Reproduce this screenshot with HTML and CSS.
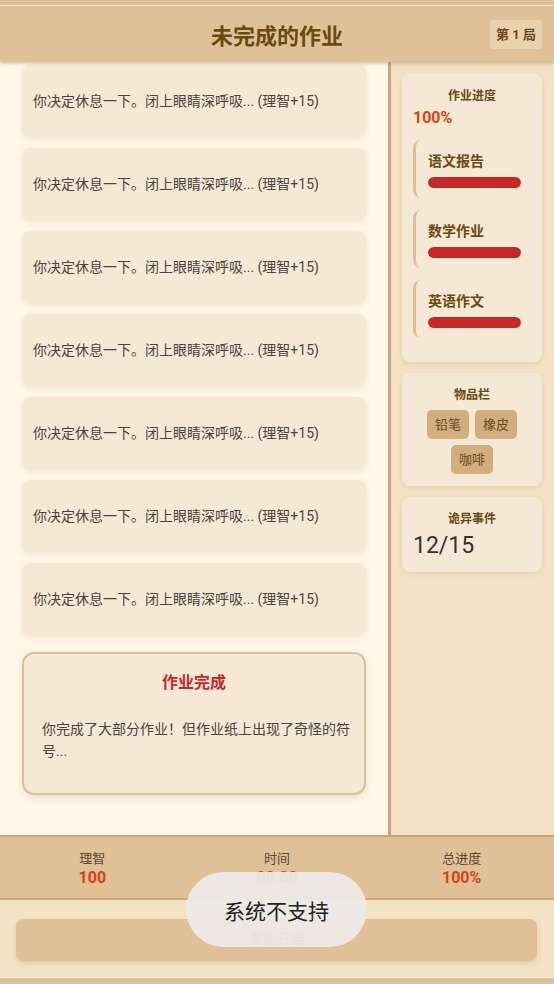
FILE: index.html
```html
<!DOCTYPE html>
<html lang="zh-CN">
<head>
    <meta charset="UTF-8">
    <meta name="viewport" content="width=device-width, initial-scale=1.0">
    <title>未完成的作业</title>
    <link rel="stylesheet" href="styles.css">
</head>
<body>
    <div class="app">
        <header class="header">
            <h1>未完成的作业</h1>
            <span class="round">第 1 局</span>
        </header>

        <div class="main">
            <div class="story">
                <div class="event">你决定休息一下。闭上眼睛深呼吸... (理智+15)</div>
                <div class="event">你决定休息一下。闭上眼睛深呼吸... (理智+15)</div>
                <div class="event">你决定休息一下。闭上眼睛深呼吸... (理智+15)</div>
                <div class="event">你决定休息一下。闭上眼睛深呼吸... (理智+15)</div>
                <div class="event">你决定休息一下。闭上眼睛深呼吸... (理智+15)</div>
                <div class="event">你决定休息一下。闭上眼睛深呼吸... (理智+15)</div>
                <div class="event">你决定休息一下。闭上眼睛深呼吸... (理智+15)</div>
                <div class="result">
                    <h2>作业完成</h2>
                    <p>你完成了大部分作业！但作业纸上出现了奇怪的符号...</p>
                </div>
            </div>

            <aside class="sidebar">
                <div class="panel">
                    <h3>作业进度</h3>
                    <div class="percent">100%</div>
                    <div class="task">
                        <div class="task-name">语文报告</div>
                        <div class="bar"><div class="bar-fill" style="width: 100%"></div></div>
                    </div>
                    <div class="task">
                        <div class="task-name">数学作业</div>
                        <div class="bar"><div class="bar-fill" style="width: 100%"></div></div>
                    </div>
                    <div class="task">
                        <div class="task-name">英语作文</div>
                        <div class="bar"><div class="bar-fill" style="width: 100%"></div></div>
                    </div>
                </div>
                <div class="panel">
                    <h3>物品栏</h3>
                    <div class="items">
                        <span class="item">铅笔</span>
                        <span class="item">橡皮</span>
                        <span class="item">咖啡</span>
                    </div>
                </div>
                <div class="panel">
                    <h3>诡异事件</h3>
                    <div class="count">12/15</div>
                </div>
            </aside>
        </div>

        <div class="stats">
            <div class="stat">
                <div class="stat-label">理智</div>
                <div class="stat-value">100</div>
            </div>
            <div class="stat">
                <div class="stat-label">时间</div>
                <div class="stat-value">08:00</div>
            </div>
            <div class="stat">
                <div class="stat-label">总进度</div>
                <div class="stat-value">100%</div>
            </div>
        </div>

        <div class="footer">
            <button class="restart">重新开始</button>
        </div>
    </div>

    <div class="toast">系统不支持</div>
</body>
</html>
```

FILE: styles.css
```css
body {
    margin: 0;
    padding: 5px 0 0;
    height: 984px;
    box-sizing: border-box;
    background-color: #e0c097;
    font-family: Roboto, "Noto Sans CJK SC", sans-serif;
    overflow: hidden;
}
.app {
    display: flex;
    flex-direction: column;
    border-top: 1px solid #fbf0dc;
    border-bottom: 1px solid #fbf0dc;
}
.header {
    position: relative;
    z-index: 2;
    height: 56px;
    display: flex;
    align-items: center;
    justify-content: center;
    background-color: #e0c097;
    box-shadow: 0 2px 3px rgba(120, 80, 30, 0.25);
}
.header h1 {
    margin: 0;
    font-size: 22px;
    font-weight: bold;
    color: #6b4a12;
}
.round {
    position: absolute;
    right: 12px;
    top: 14px;
    padding: 5px 6px;
    font-size: 13px;
    font-weight: bold;
    line-height: 19px;
    color: #6b4a12;
    background-color: #e9d0ae;
    border-radius: 4px;
}
.main {
    display: flex;
    height: 773px;
}
.story {
    width: 391px;
    flex-shrink: 0;
    padding: 3px 22px 0;
    box-sizing: border-box;
    background-color: #fff8e8;
    border-right: 3px solid #c9a577;
    overflow: hidden;
}
.event {
    padding: 26px 11px;
    margin-bottom: 11px;
    font-size: 14px;
    line-height: 20px;
    color: #4a4440;
    background-color: #f5e9d6;
    border-radius: 8px;
    box-shadow: 0 2px 6px rgba(120, 80, 30, 0.12);
}
.result {
    margin-top: 17px;
    padding: 18px 12px 31px 18px;
    background-color: #f5e9d6;
    border: 2px solid #ddc096;
    border-radius: 12px;
    box-shadow: 0 3px 8px rgba(120, 80, 30, 0.15);
}
.result h2 {
    margin: 0 0 24px;
    padding-right: 6px;
    font-size: 16px;
    line-height: 22px;
    text-align: center;
    color: #c62828;
}
.result p {
    margin: 0;
    font-size: 14px;
    line-height: 22px;
    color: #4a4440;
}
.sidebar {
    flex: 1;
    padding: 12px 12px 0 11px;
    background-color: #f2e2c3;
}
.panel {
    padding: 14px 11px 12px;
    margin-bottom: 11px;
    background-color: #f5e8d5;
    border-radius: 8px;
    box-shadow: 0 2px 5px rgba(120, 80, 30, 0.1);
}
.panel h3 {
    margin: 0;
    font-size: 12px;
    line-height: 16px;
    text-align: center;
    color: #6b4a12;
}
.percent {
    margin-top: 4px;
    font-size: 16px;
    font-weight: bold;
    line-height: 20px;
    color: #d84315;
}
.task {
    margin-top: 12px;
    padding: 11px 10px 10px 12px;
    border-left: 3px solid #dcc096;
    border-radius: 8px;
}
.task:last-child {
    margin-bottom: 12px;
}
.task-name {
    font-size: 14px;
    font-weight: bold;
    line-height: 20px;
    color: #6b4a12;
}
.bar {
    margin-top: 6px;
    height: 11px;
    border-radius: 6px;
    background-color: #e6d2b5;
    overflow: hidden;
}
.bar-fill {
    height: 100%;
    background-color: #c62828;
    border-radius: 6px;
}
.items {
    display: flex;
    flex-wrap: wrap;
    justify-content: center;
    gap: 6px;
    margin-top: 7px;
}
.item {
    padding: 6px 8px;
    font-size: 13px;
    line-height: 17px;
    color: #6b4a26;
    background-color: #d2ad7d;
    border-radius: 5px;
}
.count {
    margin-top: 5px;
    font-size: 23px;
    line-height: 28px;
    color: #333;
}
.stats {
    display: flex;
    height: 61px;
    background-color: #e0c097;
    border-top: 2px solid #c9a577;
    border-bottom: 2px solid #c9a577;
}
.stat {
    flex: 1;
    display: flex;
    flex-direction: column;
    align-items: center;
    justify-content: center;
    padding-top: 2px;
}
.stat-label {
    font-size: 13px;
    line-height: 18px;
    color: #5d4632;
}
.stat-value {
    font-size: 16px;
    font-weight: bold;
    line-height: 20px;
    color: #d84315;
}
.footer {
    height: 77px;
    padding: 19px 17px 0 16px;
    box-sizing: border-box;
    background-color: #f2e3c4;
}
.restart {
    display: block;
    width: 100%;
    height: 42px;
    padding: 0 0 4px;
    font-family: inherit;
    font-size: 14px;
    color: #8b5a2b;
    background-color: #e0c097;
    border: none;
    border-radius: 8px;
    box-shadow: 0 2px 5px rgba(120, 80, 30, 0.18);
}
.toast {
    position: absolute;
    left: 186px;
    top: 872px;
    width: 181px;
    height: 75px;
    display: flex;
    align-items: center;
    justify-content: center;
    font-size: 21px;
    color: #222;
    background-color: rgba(236, 233, 230, 0.95);
    border-radius: 38px;
}
```
